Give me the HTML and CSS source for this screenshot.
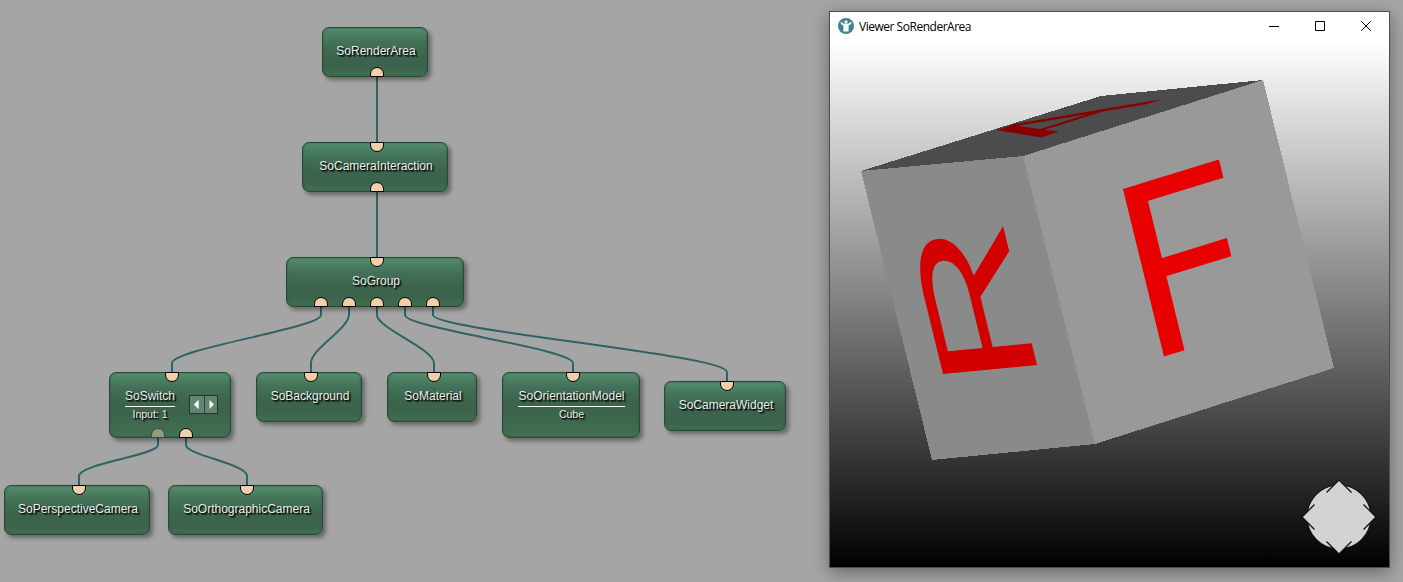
FILE: index.html
```
<!DOCTYPE html>
<html lang="en">
<head>
<meta charset="utf-8">
<title>Scene network</title>
<link rel="stylesheet" href="styles.css">
</head>
<body>
<main class="desktop">
  <svg class="wires" viewBox="0 0 820 582">
    <path d="M377 77V142"/>
    <path d="M377 192V257"/>
    <path d="M321 307V315C321 328 172 349 172 363V372"/>
    <path d="M349 307V315C349 328 311 349 311 363V372"/>
    <path d="M377 307V315C377 328 434 349 434 363V372"/>
    <path d="M405 307V315C405 328 573 349 573 363V372"/>
    <path d="M433 307V315C433 330 727 355 727 372V381"/>
    <path d="M158 438V445C158 455 79 464 79 476V485"/>
    <path d="M186 438V445C186 455 247 464 247 476V485"/>
  </svg>

  <section class="node render-area"><span class="name">SoRenderArea</span><i class="port out" style="left:48px"></i></section>
  <section class="node camera-interaction"><i class="port in" style="left:68px"></i><span class="name">SoCameraInteraction</span><i class="port out" style="left:68px"></i></section>
  <section class="node group"><i class="port in" style="left:84px"></i><span class="name">SoGroup</span>
    <i class="port out" style="left:28px"></i><i class="port out" style="left:56px"></i><i class="port out" style="left:84px"></i><i class="port out" style="left:112px"></i><i class="port out" style="left:140px"></i>
  </section>
  <section class="node tall switch"><i class="port in" style="left:56px"></i>
    <div class="stack"><span class="name">SoSwitch</span><span class="detail">Input: 1</span></div>
    <div class="stepper">
      <svg viewBox="0 0 14 17"><path d="M9 3.5V13.5L4 8.5Z"/></svg>
      <svg viewBox="0 0 14 17"><path d="M5 3.5V13.5L10 8.5Z"/></svg>
    </div>
    <i class="port out off" style="left:42px"></i><i class="port out" style="left:70px"></i>
  </section>
  <section class="node background"><i class="port in" style="left:48px"></i><span class="name">SoBackground</span></section>
  <section class="node material"><i class="port in" style="left:40px"></i><span class="name">SoMaterial</span></section>
  <section class="node tall orientation"><i class="port in" style="left:64px"></i>
    <div class="stack"><span class="name">SoOrientationModel</span><span class="detail">Cube</span></div>
  </section>
  <section class="node widget"><i class="port in" style="left:56px"></i><span class="name">SoCameraWidget</span></section>
  <section class="node perspective"><i class="port in" style="left:68px"></i><span class="name">SoPerspectiveCamera</span></section>
  <section class="node orthographic"><i class="port in" style="left:72px"></i><span class="name">SoOrthographicCamera</span></section>

  <section class="viewer">
    <header class="titlebar">
      <svg class="app-icon" viewBox="0 0 16 16">
        <circle class="badge" cx="8" cy="8" r="8"/>
        <circle class="figure" cx="8" cy="3.7" r="1.5"/>
        <path class="figure" d="M2.800 3.500L5.200 5.500H10.800L13.200 3.500V6L10.600 7.500V13.600H5.400V7.500L2.800 6Z"/>
      </svg>
      <span class="title">Viewer SoRenderArea</span>
      <div class="controls">
        <svg viewBox="0 0 12 12"><path d="M1 6.500H11"/></svg>
        <svg viewBox="0 0 12 12"><path d="M1.500 1.500H10.500V10.500H1.500Z"/></svg>
        <svg class="close" viewBox="0 0 12 12"><path d="M1.200 1.200L10.800 10.800M10.800 1.200L1.200 10.800"/></svg>
      </div>
    </header>
    <svg class="scene" viewBox="830 42 559 525">
      <g class="cube">
        <polygon class="top" points="861,171 1101,96 1263,80 1023,156"/>
        <polygon class="side" points="861,171 1023,156 1095,444 932,460"/>
        <polygon class="front" points="1023,156 1263,80 1334,368 1095,444"/>
      </g>
      <text class="letter letter-a" transform="matrix(1.84 -.581 1.4 -.128 1040.6 137.6)">A</text>
      <text class="letter letter-r" transform="matrix(-.572 -2.34 1.366 -.131 1041.7 384.2)">R</text>
      <text class="letter letter-f" transform="matrix(2.18 -.67 .577 2.356 1146.1 362)">F</text>
      <g class="pad" transform="translate(1339 517)">
        <circle r="32"/>
        <path class="tips" d="M-12.500 -24.500L0 -37L12.500 -24.500ZM-12.500 24.500L0 37L12.500 24.500ZM-24.500 -12.500L-37 0L-24.500 12.500ZM24.500 -12.500L37 0L24.500 12.500Z"/>
        <path class="edges" d="M-12.500 -24.500L0 -37L12.500 -24.500M-12.500 24.500L0 37L12.500 24.500M-24.500 -12.500L-37 0L-24.500 12.500M24.500 -12.500L37 0L24.500 12.500"/>
      </g>
    </svg>
  </section>
</main>
</body>
</html>
```
FILE: styles.css
```
* { box-sizing: border-box; }
body { margin: 0; background: #a5a5a5; }
.desktop {
  position: relative;
  width: 1403px;
  height: 582px;
  overflow: hidden;
  font-family: "Liberation Sans", sans-serif;
}
.wires { position: absolute; left: 0; top: 0; width: 820px; height: 582px; }
.wires path { fill: none; stroke: #2f6464; stroke-width: 2; }

/* Nodes sit freely on the network canvas */
.node {
  position: absolute;
  display: flex;
  justify-content: center;
  height: 50px;
  padding-top: 16px;
  padding-left: 2px;
  border: 1px solid #2a4a39;
  border-radius: 7px;
  background: linear-gradient(#568f6e 0, #4a7e61 7px, #427057 15px, #3c644d 29px, #3c644d 40px, #41704f 100%);
  box-shadow: inset 0 0 2px #2f5340, 3px 3px 4px rgba(0, 0, 0, .38);
  color: #e9efeb;
  text-shadow: 1px 1px 1px rgba(0, 0, 0, .9), 2px 2px 1px rgba(0, 0, 0, .65);
}
.tall { height: 66px; }
.name { font-size: 12px; line-height: 14px; white-space: nowrap; }
.detail { font-size: 10.5px; line-height: 13px; }
.stack { display: flex; flex-direction: column; align-items: center; }
.stack .name { padding-bottom: 3px; border-bottom: 1px solid #fff; }
.stack .detail { padding-top: 1px; }

.render-area { left: 322px; top: 27px; width: 106px; }
.camera-interaction { left: 302px; top: 142px; width: 146px; }
.group { left: 286px; top: 257px; width: 178px; }
.switch { left: 109px; top: 372px; width: 122px; justify-content: flex-start; gap: 14px; padding-left: 15px; }
.background { left: 256px; top: 372px; width: 106px; }
.material { left: 387px; top: 372px; width: 90px; }
.orientation { left: 502px; top: 372px; width: 138px; padding-left: 1px; }
.widget { left: 664px; top: 381px; width: 122px; }
.perspective { left: 4px; top: 485px; width: 146px; }
.orthographic { left: 168px; top: 485px; width: 155px; }

.port { position: absolute; width: 14px; height: 10px; margin-left: -1px; border: 1px solid #000; background: #f1d0a9; }
.in { top: -1px; border-radius: 0 0 7px 7px; }
.out { bottom: -1px; border-radius: 7px 7px 0 0; }
.off { background: #919c7d; border-color: #344d3c; }

.stepper { display: flex; width: 29px; height: 19px; margin-top: 6px; border: 1px solid #23382c; background: #628471; }
.stepper svg { width: 14px; height: 17px; }
.stepper svg + svg { border-left: 1px solid #2c4838; }
.stepper path { fill: #fff; }

.viewer {
  position: absolute;
  left: 829px;
  top: 11px;
  display: flex;
  flex-direction: column;
  width: 561px;
  height: 557px;
  border: 1px solid #4d4d4d;
  background: #fff;
  box-shadow: 0 4px 16px rgba(0, 0, 0, .38);
}
.titlebar { display: flex; align-items: center; height: 30px; padding: 0 17px 2px 8px; }
.app-icon { width: 16px; height: 16px; }
.badge { fill: #448095; }
.figure { fill: #fff; }
.title { margin-left: 5px; font: 12px "Open Sans", "Noto Sans", sans-serif; letter-spacing: -.48px; color: #000; }
.controls { display: flex; gap: 34px; margin-left: auto; }
.controls svg { width: 12px; height: 12px; }
.controls path { fill: none; stroke: #000; stroke-width: 1; }

.scene { width: 559px; height: 525px; background: linear-gradient(#fff, #000); }
.cube polygon { shape-rendering: crispEdges; }
.top { fill: #4c4c4c; }
.side { fill: #8a8a8a; }
.front { fill: #999; }
.letter { font-size: 100px; }
.letter-a { font-family: "Liberation Sans", sans-serif; fill: #870000; }
.letter-r { font-family: "Liberation Sans", sans-serif; fill: #d30000; }
.letter-f { font-family: Roboto, sans-serif; fill: #e80000; }
.pad circle { fill: #d3d3d3; stroke: #111; stroke-width: 1.2; }
.tips { fill: #d3d3d3; }
.edges { fill: none; stroke: #111; stroke-width: 1.3; }
```
